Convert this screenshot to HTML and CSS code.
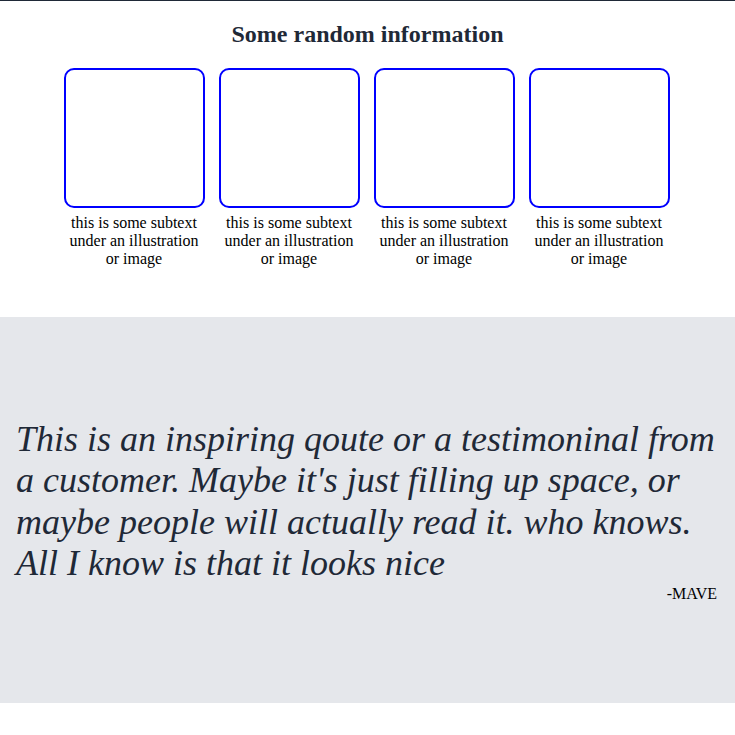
FILE: index.html
```html
<!DOCTYPE html>
<html>
<head>
<meta charset="utf-8">
<link rel="stylesheet" href="styles.css">
</head>
<body>
<div class="page">
  <section class="info">
    <h2 class="info-title">Some random information</h2>
    <div class="cards">
      <div class="card"><div class="card-box"></div><p class="card-text">this is some subtext under an illustration or image</p></div>
      <div class="card"><div class="card-box"></div><p class="card-text">this is some subtext under an illustration or image</p></div>
      <div class="card"><div class="card-box"></div><p class="card-text">this is some subtext under an illustration or image</p></div>
      <div class="card"><div class="card-box"></div><p class="card-text">this is some subtext under an illustration or image</p></div>
    </div>
  </section>
  <section class="quote">
    <div class="quote-inner">
      <p class="quote-text">This is an inspiring qoute or a testimoninal from a customer. Maybe it's just filling up space, or maybe people will actually read it. who knows. All I know is that it looks nice</p>
      <p class="quote-author">-MAVE</p>
    </div>
  </section>
</div>
</body>
</html>
```
FILE: styles.css
```css
html, body {
  margin: 0;
  padding: 0;
  background: #ffffff;
}
.page {
  border-top: 1px solid #1f2937;
  font-family: "Liberation Serif", "Times New Roman", serif;
  color: #1f2937;
}
.info {
  display: flex;
  flex-direction: column;
  align-items: center;
  padding: 19px 0 49px;
}
.info-title {
  margin: 0;
  font-size: 24px;
  line-height: 28px;
  font-weight: bold;
  color: #1f2937;
}
.cards {
  display: flex;
  gap: 14px;
  margin-top: 20px;
  margin-right: 2px;
}
.card {
  width: 141px;
  display: flex;
  flex-direction: column;
  align-items: center;
}
.card-box {
  width: 141px;
  height: 140px;
  box-sizing: border-box;
  border: 2px solid #0000ff;
  border-radius: 10px;
}
.card-text {
  margin: 6px 0 0;
  font-size: 16px;
  line-height: 18px;
  text-align: center;
  color: #000000;
}
.quote {
  background: #e5e7eb;
  height: 386px;
  box-sizing: border-box;
  display: flex;
  flex-direction: column;
  justify-content: center;
  padding: 1px 18px 0 16px;
}
.quote-text {
  margin: 0;
  font-size: 36px;
  line-height: 41.5px;
  font-style: italic;
}
.quote-author {
  margin: 0;
  font-size: 16px;
  line-height: 18px;
  text-align: right;
  color: #000000;
}
```
